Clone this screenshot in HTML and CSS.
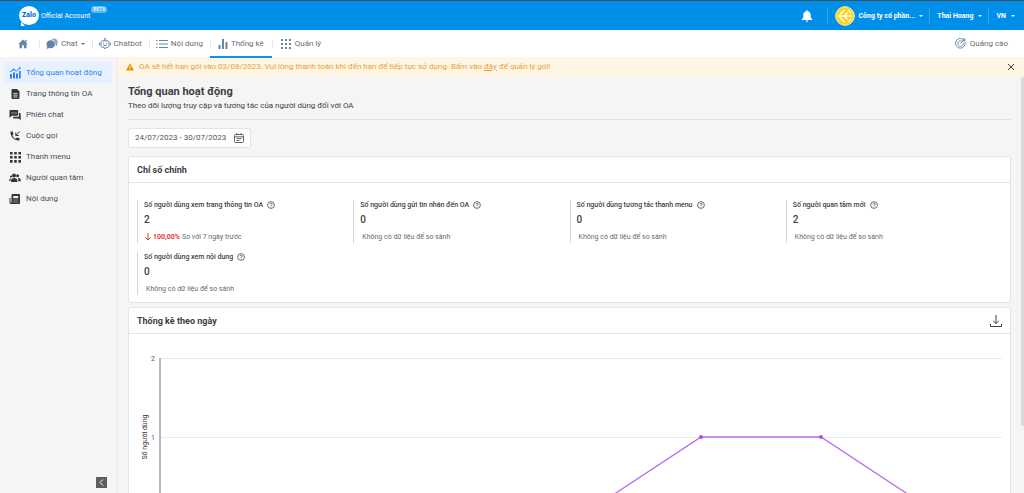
FILE: index.html
```html
<!DOCTYPE html>
<html lang="vi">
<head>
<meta charset="utf-8">
<meta name="viewport" content="width=device-width, initial-scale=1">
<title>Zalo Official Account</title>
<link rel="stylesheet" href="styles.css">
</head>
<body>
<svg class="defs" aria-hidden="true">
  <symbol id="help" viewBox="0 0 16 16"><circle cx="8" cy="8" r="6.800" fill="none" stroke="currentColor" stroke-width="1.500"/><path d="M5.800 6.500a2.200 2.200 0 1 1 3.300 1.900C8.200 8.900 8 9.200 8 10M8 11.200v1.300" fill="none" stroke="currentColor" stroke-width="1.500"/></symbol>
</svg>
<header class="topbar">
  <a class="brand" href="#">
    <span class="logo">Zalo</span>
    <span class="brand-name">Official Account</span>
    <span class="beta">BETA</span>
  </a>
  <div class="account">
    <button class="bell" aria-label="Thông báo"><svg width="12" height="12" viewBox="0 0 12 12"><path d="M6 .3c.6 0 .9.4.9.9C8.900 1.700 9.700 3.200 9.700 5v2.600l1.500 1.600v.7H.8v-.7l1.500-1.600V5c0-1.800.8-3.300 2.800-3.800 0-.5.3-.9.9-.9zM4.800 10.400h2.400c0 .8-.5 1.300-1.200 1.300s-1.200-.5-1.200-1.300z" fill="currentColor"/></svg></button>
    <button class="account-item company"><svg width="20" height="20" viewBox="0 0 20 20"><circle cx="10" cy="10" r="9.300" fill="#ffd21f" stroke="#fff3b8"/><path d="M9.500 3.800 3.800 10l5.700 6.200M4 10h5.500M9.500 10l3-3.500M9.500 10l3 3.500M9.500 10H17M13 4l3.200 3M13 16l3.200-3" fill="none" stroke="#fffbe0" stroke-width="1.600"/></svg><span>Công ty cổ phần...</span><i class="caret"></i></button>
    <button class="account-item"><span>Thai Hoang</span><i class="caret"></i></button>
    <button class="account-item"><span>VN</span><i class="caret"></i></button>
  </div>
</header>
<nav class="menu">
  <a class="menu-item home" href="#" aria-label="Trang chủ"><svg width="10" height="10" viewBox="0 0 10 10"><path d="M5 .5 9.700 5H8.500v4.300H6V6.300H4v3H1.500V5H.3zM7 .9h1.500v2.500L7 2z" fill="currentColor"/></svg></a>
  <a class="menu-item" href="#"><svg width="12" height="12" viewBox="0 0 12 12"><path d="M5.500 1.200c1-.7 2-.9 3-.7 2 .3 3.200 1.700 3.200 3.600 0 1.100-.3 1.900-.8 2.600l.4 1.700-1.600-.4c.1-3.500-1.400-5.800-4.200-6.800z" fill="#8fa9c3"/><path d="M4.700 2.300c2.500 0 4.300 1.700 4.300 4s-1.800 4-4.300 4c-.6 0-1.200-.1-1.700-.3L.6 10.900l.6-2.200C.7 8 .4 7.200.4 6.300c0-2.300 1.800-4 4.300-4z" fill="currentColor"/></svg><span>Chat</span><i class="caret"></i></a>
  <a class="menu-item" href="#"><svg width="12" height="12" viewBox="0 0 12 12" fill="none" stroke="currentColor"><path d="M6 2.800V.8M4.800.8h2.400M3.500 2.800h5c1 0 1.500.5 1.500 1.500v3.500c0 1-.5 1.500-1.500 1.500H7L6 11l-1-1.700H3.500c-1 0-1.500-.5-1.500-1.500V4.300c0-1 .5-1.500 1.500-1.500zM.6 4.800v2.600M11.400 4.800v2.600M4.300 4.700v1.200M7.700 4.700v1.200M4.200 7.300h3.600"/></svg><span>Chatbot</span></a>
  <a class="menu-item" href="#"><svg width="12" height="12" viewBox="0 0 12 12" stroke="currentColor" stroke-width="1.200"><path d="M0 2.500h1.500M3 2.500h9M0 6h1.500M3 6h9M0 9.500h1.500M3 9.500h9"/></svg><span>Nội dung</span></a>
  <a class="menu-item active" href="#"><svg width="10" height="12" viewBox="0 0 10 12" stroke="currentColor" stroke-width="2"><path d="M1.500 11V7M5 11V1M8.500 11V4"/></svg><span>Thống kê</span></a>
  <a class="menu-item last" href="#"><svg width="10" height="12" viewBox="0 0 10 12" stroke="currentColor" stroke-width="2" stroke-dasharray="2 2"><path d="M0 2h10M0 6h10M0 10h10"/></svg><span>Quản lý</span></a>
  <a class="menu-item ads" href="#"><svg width="11" height="11" viewBox="0 0 12 12" fill="none" stroke="currentColor"><path d="M8.500 1.200A5.300 5.300 0 1 0 11 4.500M7.500 3.500A3 3 0 1 0 9 5.500M5.700 6.300 10 2M8.700 3.300V1.500L10 .4V2h1.600l-1.200 1.300z"/></svg><span>Quảng cáo</span></a>
</nav>
<div class="layout">
  <aside class="sidebar">
    <a class="side-item current" href="#"><svg width="12" height="12" viewBox="0 0 12 12"><path d="M1 7h2v4.500H1zM4 5.500h2v6H4zM7 6.500h2v5H7zM10 4h1.700v7.500H10z" fill="currentColor"/><path d="M1 5 4.500 2.500 7.500 4 11 1" fill="none" stroke="currentColor"/><circle cx="4.500" cy="2.500" r="1" fill="currentColor"/><circle cx="10.800" cy="1.200" r="1" fill="currentColor"/></svg><span>Tổng quan hoạt động</span></a>
    <a class="side-item" href="#"><svg width="12" height="12" viewBox="0 0 12 12"><path d="M3.500 1H8l2.500 2.500V10q0 1-1 1h-6q-1 0-1-1V2q0-1 1-1z" fill="currentColor"/><path d="M4.300 5.500h4.200M4.300 7.200h4.200M4.300 9h4.200" stroke="#eee" stroke-width=".8"/></svg><span>Trang thông tin OA</span></a>
    <a class="side-item" href="#"><svg width="12" height="12" viewBox="0 0 12 12"><path d="M1.500 1h6.700q1 0 1 1v3.800q0 1-1 1H3L.5 8.700V2q0-1 1-1zM10 4h.7q1 0 1 1v6.300L9.700 9.500H5q-1 0-1-1v-.8h5q1 0 1-1z" fill="currentColor"/><path d="M2.500 4h5" stroke="#eee" stroke-dasharray="1 1"/></svg><span>Phiên chat</span></a>
    <a class="side-item" href="#"><svg width="12" height="12" viewBox="0 0 12 12"><path d="M1.500 1.500h2.200l.8 2.700-1.200 1.200c.7 1.500 1.800 2.600 3.300 3.300l1.200-1.200 2.700.8v2.200C5.500 11 1 6.500 1.500 1.500z" fill="currentColor"/><path d="M10.800 1.500 7 5.300M6.800 2.500v3h3" fill="none" stroke="currentColor"/></svg><span>Cuộc gọi</span></a>
    <a class="side-item" href="#"><svg width="12" height="12" viewBox="0 0 12 12" stroke="currentColor" stroke-width="2.600" stroke-dasharray="2.600 1.600"><path d="M1 2.200h11M1 6.300h11M1 10.400h11"/></svg><span>Thanh menu</span></a>
    <a class="side-item" href="#"><svg width="12" height="12" viewBox="0 0 12 12" fill="currentColor"><circle cx="5" cy="3.500" r="2"/><circle cx="8.600" cy="3.800" r="1.500"/><circle cx="2" cy="4.600" r="1.100"/><path d="M2 10V8.500c0-1.600 1.500-2.500 3.200-2.500s3.200.9 3.200 2.500V10zM9.200 9.200h2.500V8c0-1.200-1.200-2-3-1.900.5.700.7 1.500.5 3.100zM.2 9h1.200V8l.8-1.600C1 6.300.2 7 .2 8z"/></svg><span>Người quan tâm</span></a>
    <a class="side-item" href="#"><svg width="12" height="12" viewBox="0 0 12 12"><path d="M3.500 1h6.500q1 0 1 1v8q0 1-1 1H2q-1.500 0-1.500-1.500V5h1v4.500q1 .5 1 0V2q0-1 1-1z" fill="currentColor"/><path d="M4.200 3h5v2.200h-5z" fill="#eee"/><path d="M4.200 7h5M4.200 9h5" stroke="#999" stroke-width=".8"/></svg><span>Nội dung</span></a>
    <button class="collapse" aria-label="Thu gọn"><svg width="5" height="7" viewBox="0 0 5 7"><path d="M4 .5 1 3.500l3 3" fill="none" stroke="currentColor"/></svg></button>
  </aside>
  <div class="page">
    <div class="alert">
      <svg width="8" height="8" viewBox="0 0 8 8"><path d="M4 .2 8 7.600H0z" fill="#f08c00"/><path d="M4 2.700v2.400M4 5.800v.9" stroke="#fff6e6" stroke-width=".9"/></svg>
      <p>OA sẽ hết hạn gói vào 03/08/2023. Vui lòng thanh toán khi đến hạn để tiếp tục sử dụng. Bấm vào <a href="#">đây</a> để quản lý gói!</p>
      <button class="close" aria-label="Đóng"><svg width="6" height="6" viewBox="0 0 6 6"><path d="M0 0 6 6M6 0 0 6" stroke="currentColor"/></svg></button>
    </div>
    <main class="content">
      <div class="heading">
        <h1>Tổng quan hoạt động</h1>
        <p>Theo dõi lượng truy cập và tương tác của người dùng đối với OA</p>
      </div>
      <button class="range"><span>24/07/2023 - 30/07/2023</span><svg width="10" height="10" viewBox="0 0 10 10" fill="none" stroke="currentColor" stroke-width=".9"><path d="M1.500 1.500h7q1 0 1 1v6q0 1-1 1h-7q-1 0-1-1v-6q0-1 1-1zM.5 3.800h9M2.800 0v2.200M7.200 0v2.200M2.500 5.600h5M2.500 7.500h3"/></svg></button>
      <section class="card">
        <h2 class="card-head">Chỉ số chính</h2>
        <div class="stats">
          <div class="stat"><h3>Số người dùng xem trang thông tin OA <svg class="help"><use href="#help"/></svg></h3><strong>2</strong><p class="change"><svg width="6" height="8" viewBox="0 0 6 8"><path d="M3 0v7M.5 4.500 3 7l2.500-2.500" fill="none" stroke="currentColor"/></svg><b>100,00%</b><span>So với 7 ngày trước</span></p></div>
          <div class="stat"><h3>Số người dùng gửi tin nhắn đến OA <svg class="help"><use href="#help"/></svg></h3><strong>0</strong><p>Không có dữ liệu để so sánh</p></div>
          <div class="stat"><h3>Số người dùng tương tác thanh menu <svg class="help"><use href="#help"/></svg></h3><strong>0</strong><p>Không có dữ liệu để so sánh</p></div>
          <div class="stat"><h3>Số người quan tâm mới <svg class="help"><use href="#help"/></svg></h3><strong>2</strong><p>Không có dữ liệu để so sánh</p></div>
          <div class="stat"><h3>Số người dùng xem nội dung <svg class="help"><use href="#help"/></svg></h3><strong>0</strong><p>Không có dữ liệu để so sánh</p></div>
        </div>
      </section>
      <section class="card">
        <h2 class="card-head">Thống kê theo ngày <button class="download" aria-label="Tải xuống"><svg width="12" height="12" viewBox="0 0 12 12" fill="none" stroke="currentColor"><path d="M6 0v8.500M3.200 5.800 6 8.600l2.800-2.800M.5 9v2.500h11V9"/></svg></button></h2>
        <svg class="chart" viewBox="0 0 881 200" role="img" aria-label="Thống kê theo ngày">
          <path class="grid" d="M31 24.500h842M31 103.500h842M31 182.500h842"/>
          <path class="axis" d="M31 24v158"/>
          <text class="tick" x="26" y="27">2</text>
          <text class="tick" x="26" y="106">1</text>
          <text class="axis-title" transform="translate(18 103) rotate(-90)">Số người dùng</text>
          <path class="series" d="M92 182H452L572 103H692L812 182"/>
          <circle class="dot" cx="572" cy="103" r="2"/>
          <circle class="dot" cx="692" cy="103" r="2"/>
        </svg>
      </section>
    </main>
    <div class="scroll-thumb"></div>
  </div>
</div>
</body>
</html>
```
FILE: styles.css
```css
* { box-sizing: border-box; margin: 0; }
body {
  height: 100vh;
  display: flex;
  flex-direction: column;
  overflow: hidden;
  background: #f5f5f5;
  color: #3c4043;
  font: 8px/12px Roboto, "Noto Sans", sans-serif;
}
a { color: inherit; text-decoration: none; }
button { border: 0; padding: 0; background: none; color: inherit; font: inherit; display: flex; align-items: center; cursor: pointer; }
svg { flex: none; display: block; }
.defs { position: absolute; width: 0; height: 0; }
.caret { border: 2px solid transparent; border-top-color: currentColor; border-bottom: 0; }

.topbar { display: flex; justify-content: space-between; flex: none; height: 30px; padding: 0 9px 0 19px; background: #008fe8; border-top: 1px solid #45505f; color: #fff; }
.brand { display: flex; align-items: center; font-size: 7px; }
.logo { position: relative; width: 20px; height: 19px; border-radius: 50%; background: #fff; color: #0a76d8; font-weight: 900; font-size: 7px; line-height: 19px; text-align: center; }
.logo::after { content: ""; position: absolute; left: 2px; bottom: -1px; border: 4px solid transparent; border-left-color: #fff; border-bottom: 0; }
.brand-name { margin-left: 2px; }
.beta { align-self: flex-start; margin: 5px 0 0 1px; padding: 0 2px; border-radius: 3px; background: #5bb9f2; font-size: 5px; line-height: 7px; }
.account { display: flex; align-items: center; font-weight: 700; font-size: 7px; }
.bell { margin-right: 14px; }
.account-item { gap: 5px; height: 16px; padding: 0 6px 0 7px; border-left: 1px solid #3d9fe6; }
.account-item:last-child { padding-right: 0; }
.account .company { gap: 4px; }

.menu { display: flex; align-items: center; flex: none; height: 27px; padding: 0 16px 0 10px; background: #fff; color: #666d75; }
.menu-item { position: relative; display: flex; align-items: center; gap: 3px; height: 27px; padding: 0 7px; }
.menu-item svg { color: #6285a8; }
.menu-item + .menu-item::before { content: ""; position: absolute; left: 0; top: 9px; height: 9px; border-left: 1px solid #e5e8eb; }
.menu .home { padding: 0 11px 0 8px; }
.menu .active { padding: 0 8px; }
.menu .last { padding-left: 9px; gap: 4px; }
.active::after { content: ""; position: absolute; left: 0; right: 0; bottom: -1px; height: 2px; background: #0a91e8; z-index: 1; }
.menu .ads { margin-left: auto; padding-right: 0; gap: 4px; }
.menu .ads::before { display: none; }

.layout { display: flex; flex: 1; min-height: 0; }
.sidebar { position: relative; width: 118px; flex: none; padding: 5px 5px 0 4px; border-right: 1px solid #ebebeb; }
.side-item { display: flex; align-items: center; gap: 5px; height: 21px; padding-left: 5px; border-radius: 2px; color: #4b5056; }
.side-item svg { color: #33373b; }
.side-item.current, .current svg { color: #2d7ff9; }
.current { background: #e6f1ff; }
.collapse { position: absolute; left: 96px; bottom: 5px; width: 11px; height: 11px; justify-content: center; background: #5c5f63; color: #fff; }

.page { position: relative; flex: 1; min-width: 0; display: flex; flex-direction: column; }
.alert { display: flex; align-items: center; gap: 5px; flex: none; height: 20px; padding: 0 10px 0 8px; background: #fff5e3; color: #e9a23b; }
.alert a { text-decoration: underline; }
.close { margin-left: auto; color: #444; }
.content { flex: 1; min-height: 0; overflow: hidden; padding: 0 13px 0 10px; }
.heading { padding: 7px 0 6px; margin-bottom: 8px; border-bottom: 1px solid #dfe0e1; }
h1 { font-size: 11px; line-height: 15px; font-weight: 700; }
.heading p { line-height: 14px; }
.range { gap: 8px; height: 20px; padding: 0 6px; border: 1px solid #e3e4e6; border-radius: 2px; background: #fff; color: #555; }
.card { margin-top: 8px; border: 1px solid #e4e5e7; border-radius: 2px; background: #fff; }
.card + .card { margin-top: 4px; }
.card-head { display: flex; align-items: center; justify-content: space-between; height: 26px; padding: 0 8px; border-bottom: 1px solid #e4e5e7; font-size: 9px; font-weight: 700; }
.stats { display: grid; grid-template-columns: repeat(4, 1fr); row-gap: 9px; padding: 17px 8px 7px; }
.stat { height: 43px; padding-left: 6px; border-left: 1px solid #d3d5da; }
.stat h3 { display: flex; align-items: center; gap: 4px; font-size: 7px; line-height: 10px; font-weight: 500; }
.help { width: 8px; height: 8px; }
.stat strong { display: block; margin: 4px 0 5px; font-size: 10px; line-height: 12px; font-weight: 500; }
.stat p { padding-left: 2px; font-size: 7px; color: #666a70; }
.stat .change { display: flex; align-items: center; gap: 2px; padding-left: 1px; }
.change svg, .change b { color: #e53935; }
.chart { width: 100%; height: auto; }
.grid { stroke: #ececec; }
.axis { stroke: #777; }
.tick { font-size: 7px; text-anchor: end; fill: #555; }
.axis-title { font-size: 7px; text-anchor: middle; fill: #333; }
.series { fill: none; stroke: #b56ef0; stroke-width: 1.300; }
.dot { fill: #b94fd6; }
.scroll-thumb { position: absolute; right: 0; top: 20px; width: 3px; height: 80%; background: #d9dadb; border-radius: 2px; }
```
